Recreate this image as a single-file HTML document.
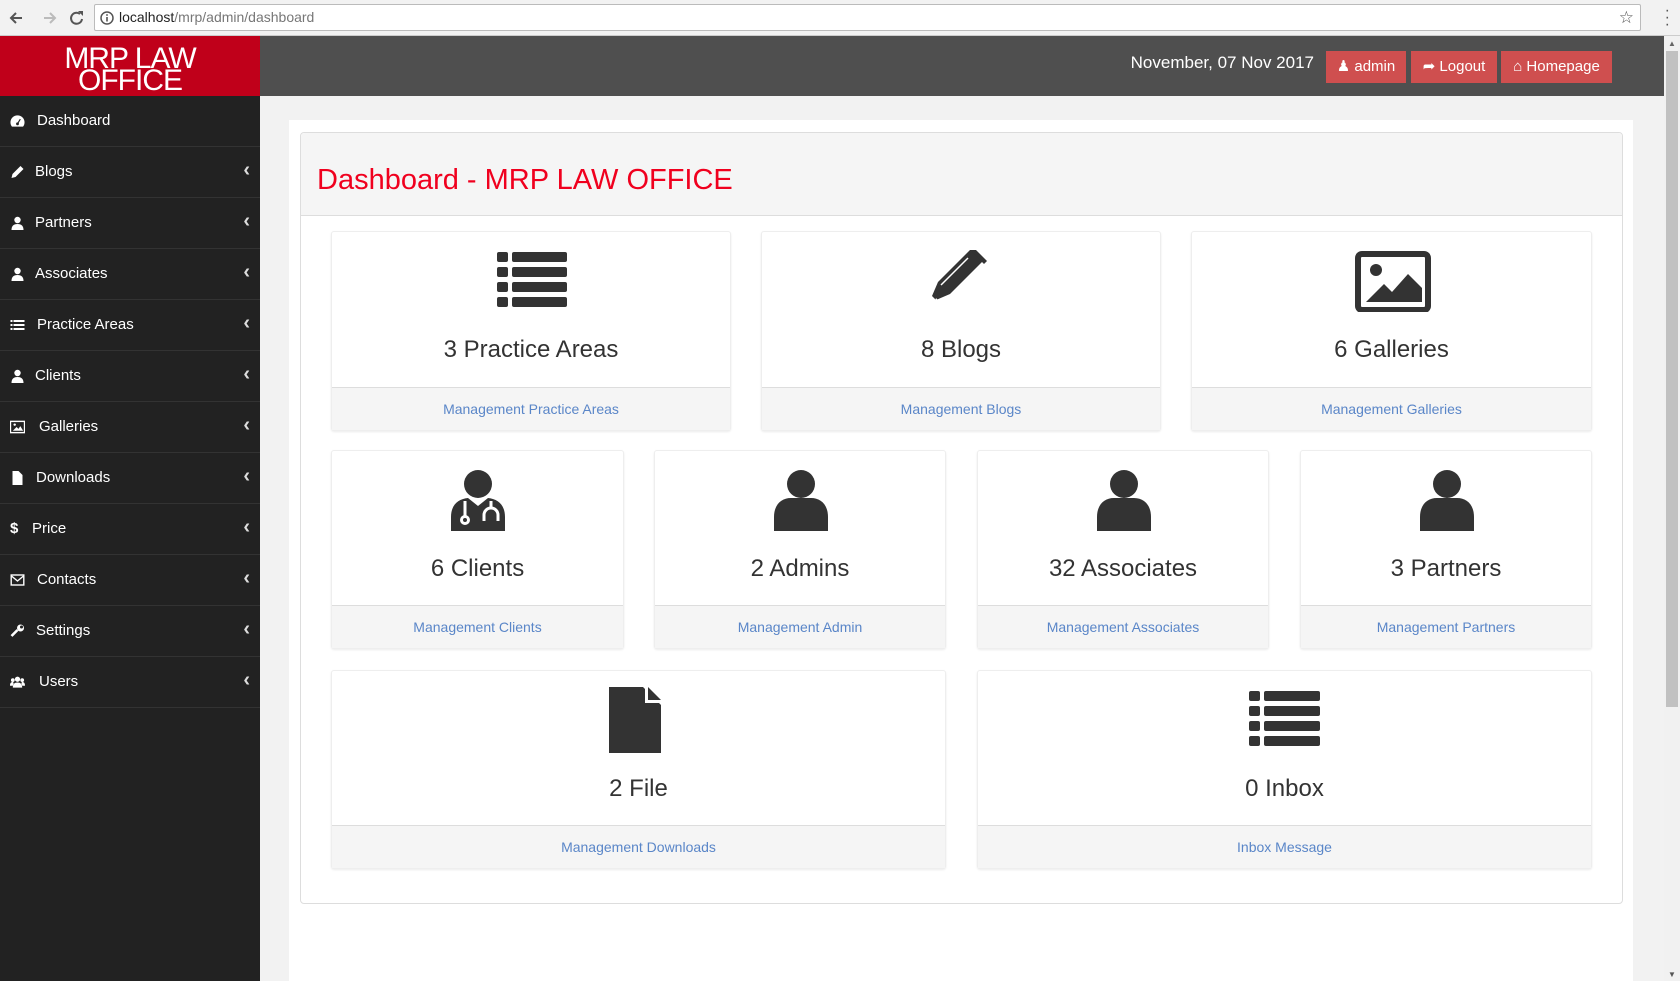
<!DOCTYPE html>
<html><head><meta charset="utf-8">
<style>
*{box-sizing:border-box;margin:0;padding:0}
body{width:1680px;height:981px;overflow:hidden;background:#f2f2f2;font-family:"Liberation Sans",sans-serif;position:relative}
.chrome{position:absolute;left:0;top:0;width:1680px;height:36px;background:#f2f2f2;border-bottom:1px solid #ccc}
.url{position:absolute;left:94px;top:4px;width:1547px;height:27px;background:#fff;border:1px solid #bbb;border-radius:2px;font-size:14px;line-height:25px;padding-left:24px;color:#777}
.url b{font-weight:normal;color:#222}
.header{position:absolute;left:0;top:36px;width:1664px;height:60px;background:#4f4f4f}
.logo{position:absolute;left:0;top:36px;width:260px;height:60px;background:#c0001a;color:#fff;text-align:center;font-size:30px;line-height:22px;padding-top:12px;letter-spacing:-1px}
.date{position:absolute;right:366px;top:53px;color:#fff;font-size:17px}
.btn{position:absolute;top:51px;height:32px;background:#cf4f4f;color:#fff;font-size:15px;line-height:32px;text-align:center}
.side{position:absolute;left:0;top:96px;width:260px;height:885px;background:#222}
.item{height:51px;border-bottom:1px solid #333;color:#fff;font-size:15px;line-height:50px;padding-left:37px;position:relative}
.item .ic{position:absolute;left:10px;top:18px;width:15px;height:14px}
.item .ch{position:absolute;right:10px;top:-2px;font-size:20px;font-weight:bold;color:#ddd}
.scroll{position:absolute;right:0;top:36px;width:16px;height:945px;background:#f1f1f1}
.thumb{position:absolute;right:2px;top:15px;width:12px;height:656px;background:#c1c1c1}
.panel{position:absolute;left:289px;top:120px;width:1344px;height:861px;background:#fff}
.card{position:absolute;left:300px;top:132px;width:1323px;height:772px;border:1px solid #ddd;border-radius:4px;background:#fff}
.chead{height:83px;background:#f5f5f5;border-bottom:1px solid #ddd;border-radius:4px 4px 0 0}
.chead h1{font-weight:normal;color:#f0001e;font-size:29px;padding:31px 0 0 16px}
.tile{position:absolute;background:#fff;border:1px solid #eee;border-radius:3px;box-shadow:0 1px 2px rgba(0,0,0,.08);text-align:center}
.tile .ico{position:absolute;left:0;right:0;top:18px;height:62px}
.tile .num{position:absolute;left:0;right:0;top:104px;font-size:24px;color:#333}
.tile .ft{position:absolute;left:0;right:0;bottom:0;height:43px;background:#f5f5f5;border-top:1px solid #ddd;color:#5a86c8;font-size:14px;line-height:42px}
</style></head><body>
<div class="chrome">
<svg style="position:absolute;left:8px;top:9px" width="80" height="18"><path d="M14 9H3M8 4L3 9l5 5" stroke="#555" stroke-width="2" fill="none"/><path d="M36 9h11M42 4l5 5-5 5" stroke="#bbb" stroke-width="2" fill="none"/><path d="M72 5a5.5 5.5 0 1 0 2 5" stroke="#555" stroke-width="2" fill="none"/><path d="M70 2l5 0 0 5z" fill="#555"/></svg>
<div class="url"><svg style="position:absolute;left:5px;top:6px" width="14" height="14"><circle cx="7" cy="7" r="6" stroke="#555" stroke-width="1.5" fill="none"/><rect x="6.2" y="6" width="1.6" height="4.5" fill="#555"/><rect x="6.2" y="3.2" width="1.6" height="1.6" fill="#555"/></svg><b>localhost</b>/mrp/admin/dashboard<span style="position:absolute;right:6px;top:0;color:#555;font-size:17px">☆</span></div>
<span style="position:absolute;right:10px;top:7px;color:#555;font-size:16px;line-height:7px">·<br>·<br>·</span>
</div>
<div class="header"></div>
<div class="logo">MRP LAW<br>OFFICE</div>
<div class="date">November, 07 Nov 2017</div>
<div class="btn" style="left:1326px;width:80px">&#9823; admin</div>
<div class="btn" style="left:1411px;width:86px">&#10150; Logout</div>
<div class="btn" style="left:1501px;width:111px">&#8962; Homepage</div>
<div class="side">
<div class="item"><svg class="ic" viewBox="0 0 16 14"><path d="M8 1a7.5 7.5 0 0 0-7.5 7.5c0 1.8.6 3.3 1.6 4.5h11.8c1-1.2 1.6-2.7 1.6-4.5A7.5 7.5 0 0 0 8 1z" fill="#fff"/><circle cx="8" cy="10" r="1.5" fill="#222"/><path d="M8 10l3-5" stroke="#222" stroke-width="1.2"/></svg>Dashboard</div>
<div class="item" style="padding-left:35px"><svg class="ic" viewBox="0 0 14 14"><path d="M1 13l1-4 8-8 3 3-8 8z" fill="#fff"/></svg>Blogs<span class="ch">&lsaquo;</span></div>
<div class="item" style="padding-left:35px"><svg class="ic" viewBox="0 0 14 14"><circle cx="7" cy="4" r="3.2" fill="#fff"/><path d="M1 14c0-4 2-6 6-6s6 2 6 6z" fill="#fff"/></svg>Partners<span class="ch">&lsaquo;</span></div>
<div class="item" style="padding-left:35px"><svg class="ic" viewBox="0 0 14 14"><circle cx="7" cy="4" r="3.2" fill="#fff"/><path d="M1 14c0-4 2-6 6-6s6 2 6 6z" fill="#fff"/></svg>Associates<span class="ch">&lsaquo;</span></div>
<div class="item"><svg class="ic" viewBox="0 0 14 14"><path d="M0 2h2v2H0zM3 2h11v2H3zM0 6h2v2H0zM3 6h11v2H3zM0 10h2v2H0zM3 10h11v2H3z" fill="#fff"/></svg>Practice Areas<span class="ch">&lsaquo;</span></div>
<div class="item" style="padding-left:35px"><svg class="ic" viewBox="0 0 14 14"><circle cx="7" cy="4" r="3.2" fill="#fff"/><path d="M1 14c0-4 2-6 6-6s6 2 6 6z" fill="#fff"/></svg>Clients<span class="ch">&lsaquo;</span></div>
<div class="item" style="padding-left:39px"><svg class="ic" viewBox="0 0 16 14"><rect x=".5" y="1" width="15" height="12" fill="none" stroke="#fff" stroke-width="1.5"/><path d="M3 11l4-4 2 2 2-3 3 5z" fill="#fff"/><circle cx="5" cy="4.5" r="1.3" fill="#fff"/></svg>Galleries<span class="ch">&lsaquo;</span></div>
<div class="item" style="padding-left:36px"><svg class="ic" viewBox="0 0 14 14"><path d="M2 0h6l4 4v10H2z" fill="#fff"/></svg>Downloads<span class="ch">&lsaquo;</span></div>
<div class="item" style="padding-left:32px"><span style="position:absolute;left:10px;font-size:15px;font-weight:bold">$</span>Price<span class="ch">&lsaquo;</span></div>
<div class="item"><svg class="ic" viewBox="0 0 14 14"><rect x=".7" y="2" width="12.6" height="10" fill="none" stroke="#fff" stroke-width="1.4"/><path d="M1 3l6 5 6-5" stroke="#fff" stroke-width="1.4" fill="none"/></svg>Contacts<span class="ch">&lsaquo;</span></div>
<div class="item" style="padding-left:36px"><svg class="ic" viewBox="0 0 14 14"><path d="M1 12l6-6" stroke="#fff" stroke-width="2.6"/><circle cx="10" cy="4" r="3.5" fill="#fff"/><circle cx="11" cy="3" r="1.5" fill="#222"/></svg>Settings<span class="ch">&lsaquo;</span></div>
<div class="item" style="padding-left:39px"><svg class="ic" viewBox="0 0 16 14"><circle cx="8" cy="4" r="2.8" fill="#fff"/><circle cx="3" cy="5" r="2" fill="#fff"/><circle cx="13" cy="5" r="2" fill="#fff"/><path d="M3 13c0-4 2-5.5 5-5.5s5 1.5 5 5.5zM0 11c0-3 1-4 3-4l1 1-1 3zM16 11c0-3-1-4-3-4l-1 1 1 3z" fill="#fff"/></svg>Users<span class="ch">&lsaquo;</span></div>
</div>
<div class="scroll"><div class="thumb"></div><span style="position:absolute;left:4px;top:3px;font-size:8px;color:#666">▲</span><span style="position:absolute;left:4px;bottom:2px;font-size:8px;color:#555">▼</span></div>
<div class="panel"></div>
<div class="card"><div class="chead"><h1>Dashboard - MRP LAW OFFICE</h1></div></div>

<div class="tile" style="left:331px;top:231px;width:400px;height:200px">
<svg class="ico" viewBox="0 0 400 62"><g fill="#333"><rect x="165" y="2" width="11" height="10" rx="2"/><rect x="180" y="2" width="55" height="10" rx="2"/><rect x="165" y="17" width="11" height="10" rx="2"/><rect x="180" y="17" width="55" height="10" rx="2"/><rect x="165" y="32" width="11" height="10" rx="2"/><rect x="180" y="32" width="55" height="10" rx="2"/><rect x="165" y="47" width="11" height="10" rx="2"/><rect x="180" y="47" width="55" height="10" rx="2"/></g></svg>
<div class="num">3 Practice Areas</div><div class="ft">Management Practice Areas</div></div>
<div class="tile" style="left:761px;top:231px;width:400px;height:200px">
<svg class="ico" viewBox="0 0 400 62"><g fill="#333"><path d="M170 46l6-14 34-34 12 12-34 34-14 6z"/><path d="M210 2l3-3 12 12-3 3z"/><path d="M172 54l2-6 4 4z" fill="#fff"/></g><path d="M179 35l27-27" stroke="#fff" stroke-width="1.5"/></svg>
<div class="num">8 Blogs</div><div class="ft">Management Blogs</div></div>
<div class="tile" style="left:1191px;top:231px;width:401px;height:200px">
<svg class="ico" viewBox="0 0 401 62"><rect x="166" y="4" width="70" height="56" rx="4" fill="none" stroke="#333" stroke-width="6"/><circle cx="184" cy="20" r="6" fill="#333"/><path d="M174 52l18-18 8 8 16-18 14 14v14z" fill="#333"/></svg>
<div class="num">6 Galleries</div><div class="ft">Management Galleries</div></div>

<div class="tile" style="left:331px;top:450px;width:293px;height:199px">
<svg class="ico" viewBox="0 0 293 62"><g fill="#333"><circle cx="146" cy="15" r="14"/><path d="M119 62V48c0-12 7-18 17-19l10 8 10-8c10 1 17 7 17 19v14z"/></g><g fill="none" stroke="#fff" stroke-width="3"><path d="M133 32v15"/><circle cx="133" cy="51" r="3.5"/><path d="M159 32v6M152 52v-6a7 7 0 0 1 14 0v6"/></g></svg>
<div class="num">6 Clients</div><div class="ft">Management Clients</div></div>
<div class="tile" style="left:654px;top:450px;width:292px;height:199px">
<svg class="ico" viewBox="0 0 292 62"><g fill="#333"><circle cx="146" cy="15" r="14"/><path d="M119 62V48c0-12 7-19 17-19h20c10 0 17 7 17 19v14z"/></g></svg>
<div class="num">2 Admins</div><div class="ft">Management Admin</div></div>
<div class="tile" style="left:977px;top:450px;width:292px;height:199px">
<svg class="ico" viewBox="0 0 292 62"><g fill="#333"><circle cx="146" cy="15" r="14"/><path d="M119 62V48c0-12 7-19 17-19h20c10 0 17 7 17 19v14z"/></g></svg>
<div class="num">32 Associates</div><div class="ft">Management Associates</div></div>
<div class="tile" style="left:1300px;top:450px;width:292px;height:199px">
<svg class="ico" viewBox="0 0 292 62"><g fill="#333"><circle cx="146" cy="15" r="14"/><path d="M119 62V48c0-12 7-19 17-19h20c10 0 17 7 17 19v14z"/></g></svg>
<div class="num">3 Partners</div><div class="ft">Management Partners</div></div>

<div class="tile" style="left:331px;top:670px;width:615px;height:199px">
<svg class="ico" viewBox="0 0 615 70" style="height:70px;top:14px"><path d="M277 2h34l18 18v48H277z" fill="#333"/><path d="M313 2v16h16z" fill="#fff"/><path d="M316 2l13 13h-13z" fill="#333"/></svg>
<div class="num">2 File</div><div class="ft">Management Downloads</div></div>
<div class="tile" style="left:977px;top:670px;width:615px;height:199px">
<svg class="ico" viewBox="0 0 615 62"><g fill="#333"><rect x="271" y="2" width="11" height="10" rx="2"/><rect x="286" y="2" width="56" height="10" rx="2"/><rect x="271" y="17" width="11" height="10" rx="2"/><rect x="286" y="17" width="56" height="10" rx="2"/><rect x="271" y="32" width="11" height="10" rx="2"/><rect x="286" y="32" width="56" height="10" rx="2"/><rect x="271" y="47" width="11" height="10" rx="2"/><rect x="286" y="47" width="56" height="10" rx="2"/></g></svg>
<div class="num">0 Inbox</div><div class="ft">Inbox Message</div></div>
</body></html>
